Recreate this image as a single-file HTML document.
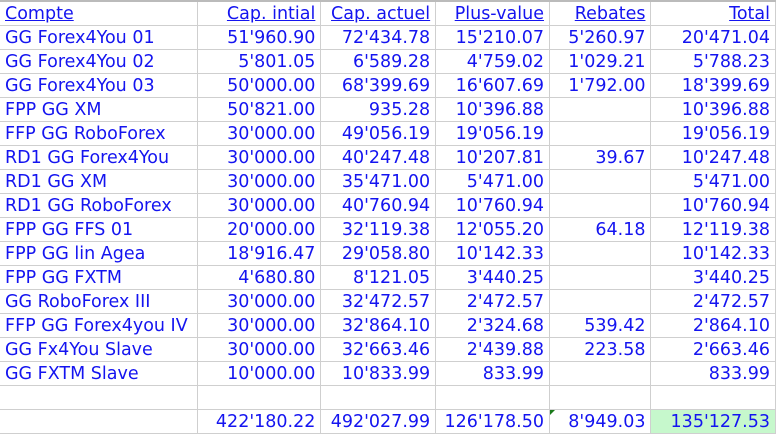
<!DOCTYPE html>
<html><head><style>
body{margin:0;background:#fff;width:777px;height:433px;overflow:hidden}
table{border-collapse:collapse;table-layout:fixed;position:absolute;left:-1px;top:0;font-family:"DejaVu Sans",Verdana,sans-serif;font-size:17.5px;color:#1414f0}
td{border:1px solid #cfcfcf;height:21px;padding:2px 5px 0 3px;white-space:nowrap;overflow:hidden;text-align:right;line-height:21px}
td:first-child{text-align:left;padding-left:5px}
tr:first-child td{text-decoration:underline;border-top:2px solid #bbb}
.g{background:#c6f8cc}
.t{position:relative}
.t:before{content:"";position:absolute;left:0;top:0;border-top:5px solid #1a7a1a;border-right:5px solid transparent}
</style></head><body>
<table>
<colgroup><col style="width:198px"><col style="width:124px"><col style="width:115px"><col style="width:114px"><col style="width:102px"><col style="width:125px"></colgroup>
<tr><td>Compte</td><td>Cap. intial</td><td>Cap. actuel</td><td>Plus-value</td><td>Rebates</td><td>Total</td></tr>
<tr><td>GG Forex4You 01</td><td>51'960.90</td><td>72'434.78</td><td>15'210.07</td><td>5'260.97</td><td>20'471.04</td></tr>
<tr><td>GG Forex4You 02</td><td>5'801.05</td><td>6'589.28</td><td>4'759.02</td><td>1'029.21</td><td>5'788.23</td></tr>
<tr><td>GG Forex4You 03</td><td>50'000.00</td><td>68'399.69</td><td>16'607.69</td><td>1'792.00</td><td>18'399.69</td></tr>
<tr><td>FPP GG XM</td><td>50'821.00</td><td>935.28</td><td>10'396.88</td><td></td><td>10'396.88</td></tr>
<tr><td>FFP GG RoboForex</td><td>30'000.00</td><td>49'056.19</td><td>19'056.19</td><td></td><td>19'056.19</td></tr>
<tr><td>RD1 GG Forex4You</td><td>30'000.00</td><td>40'247.48</td><td>10'207.81</td><td>39.67</td><td>10'247.48</td></tr>
<tr><td>RD1 GG XM</td><td>30'000.00</td><td>35'471.00</td><td>5'471.00</td><td></td><td>5'471.00</td></tr>
<tr><td>RD1 GG RoboForex</td><td>30'000.00</td><td>40'760.94</td><td>10'760.94</td><td></td><td>10'760.94</td></tr>
<tr><td>FPP GG FFS 01</td><td>20'000.00</td><td>32'119.38</td><td>12'055.20</td><td>64.18</td><td>12'119.38</td></tr>
<tr><td>FPP GG lin Agea</td><td>18'916.47</td><td>29'058.80</td><td>10'142.33</td><td></td><td>10'142.33</td></tr>
<tr><td>FPP GG FXTM</td><td>4'680.80</td><td>8'121.05</td><td>3'440.25</td><td></td><td>3'440.25</td></tr>
<tr><td>GG RoboForex III</td><td>30'000.00</td><td>32'472.57</td><td>2'472.57</td><td></td><td>2'472.57</td></tr>
<tr><td>FFP GG Forex4you IV</td><td>30'000.00</td><td>32'864.10</td><td>2'324.68</td><td>539.42</td><td>2'864.10</td></tr>
<tr><td>GG Fx4You Slave</td><td>30'000.00</td><td>32'663.46</td><td>2'439.88</td><td>223.58</td><td>2'663.46</td></tr>
<tr><td>GG FXTM Slave</td><td>10'000.00</td><td>10'833.99</td><td>833.99</td><td></td><td>833.99</td></tr>
<tr><td></td><td></td><td></td><td></td><td></td><td></td></tr>
<tr><td></td><td>422'180.22</td><td>492'027.99</td><td>126'178.50</td><td class="t">8'949.03</td><td class="g">135'127.53</td></tr>
</table>
</body></html>
